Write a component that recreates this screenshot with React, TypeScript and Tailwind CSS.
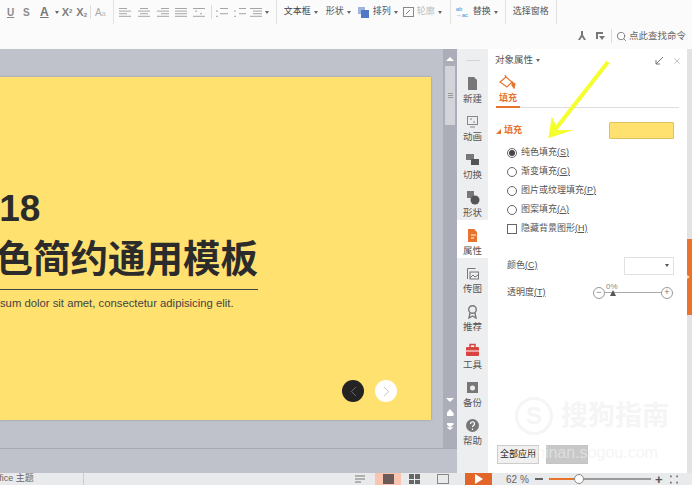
import React from 'react';
import { ChevronLeft, ChevronRight, Search, X } from 'lucide-react';

const font = { fontFamily: '"Liberation Sans", "Noto Sans CJK SC", sans-serif' };

const Caret = () => <span className="ml-[3px] inline-block border-x-[2px] border-t-[3px] border-x-transparent border-t-[#666]" />;

const Divider = ({ ml = 0 }: { ml?: number }) => (
  <div className="h-[24px] w-px shrink-0 self-start bg-[#e2e2e2]" style={{ marginLeft: ml }} />
);

const AlignIcon = ({ rows, x }: { rows: number[][]; x: number }) => (
  <svg width="12" height="10" viewBox="0 0 12 10" className="shrink-0 text-[#a5a5a5]" style={{ marginLeft: x }}>
    {rows.map(([a, b], i) => (
      <rect key={i} x={a} y={1 + i * 2.6} width={b} height="1" fill="currentColor" />
    ))}
  </svg>
);

const Ribbon = () => (
  <div className="h-[49px] shrink-0 bg-[#fbfbfb] text-[9px] text-[#666]">
    <div className="flex h-[25px] items-center pb-[1px]">
      <span className="ml-[7px] w-[8px] text-[10px] font-bold text-[#8b8b8b] underline">U</span>
      <span className="ml-[8px] w-[8px] text-[10px] font-bold text-[#8b8b8b]">S</span>
      <span className="ml-[9px] text-[12px] font-bold text-[#777] underline">A</span>
      <span className="ml-[3px]"><Caret /></span>
      <span className="ml-[3px] text-[11px] font-bold text-[#808080]">X<sup className="text-[6px]">2</sup></span>
      <span className="ml-[4px] text-[11px] font-bold text-[#808080]">X<sub className="text-[6px]">2</sub></span>
      <div className="ml-[3px] h-[14px] w-px bg-[#ddd]" />
      <span className="ml-[4px] text-[10px] text-[#aaa]">A</span>
      <span className="mt-[5px] text-[7px] text-[#bbb]">a</span>
      <div className="ml-[7px] h-[24px] w-px self-start bg-[#e2e2e2]" />
      <AlignIcon x={5} rows={[[0, 8], [0, 12], [0, 8], [0, 12]]} />
      <AlignIcon x={7} rows={[[2, 8], [0, 12], [2, 8], [0, 12]]} />
      <AlignIcon x={7} rows={[[4, 8], [0, 12], [4, 8], [0, 12]]} />
      <AlignIcon x={6} rows={[[0, 12], [0, 12], [0, 12], [0, 12]]} />
      <AlignIcon x={6} rows={[[0, 12], [2, 2], [7, 2], [0, 12]]} />
      <div className="ml-[6px] h-[14px] w-px bg-[#ddd]" />
      <AlignIcon x={4} rows={[[4, 8], [0, 2], [4, 8], [0, 2]]} />
      <AlignIcon x={6} rows={[[5, 7], [0, 2], [5, 7], [0, 2]]} />
      <AlignIcon x={4} rows={[[0, 12], [3, 9], [3, 9], [0, 12]]} />
      <Caret />
      <Divider ml={7} />
      <span className="ml-[7px] text-[#444]">文本框</span><Caret />
      <span className="ml-[8px] text-[#555]">形状</span><Caret />
      <svg width="11" height="11" viewBox="0 0 11 11" className="ml-[7px]">
        <rect x="0" y="0" width="7" height="7" fill="#9db4de" />
        <rect x="3" y="3" width="8" height="8" fill="#4f78c8" />
      </svg>
      <span className="ml-[4px] text-[#555]">排列</span><Caret />
      <svg width="11" height="11" viewBox="0 0 11 11" className="ml-[5px]" fill="none" stroke="#888">
        <rect x="0.5" y="0.5" width="10" height="9" />
        <path d="M3 7l4-4" />
      </svg>
      <span className="ml-[3px] text-[#bbb]">轮廓</span><Caret />
      <Divider ml={8} />
      <span className="ml-[5px] w-[15px] text-[6px] leading-[6px] text-[#4f8ec9]">ab<br />→ac</span>
      <span className="ml-[2px] text-[#555]">替换</span><Caret />
      <Divider ml={7} />
      <span className="ml-[7px] text-[#555]">选择窗格</span>
      <Divider ml={7} />
    </div>
    <div className="flex h-[24px] items-center justify-end pb-[2px] pr-[6px]">
      <svg width="10" height="10" viewBox="0 0 10 10" fill="#777"><path d="M4 0h2v4l3 5H7L5 6 3 9H1l3-5z" /></svg>
      <svg width="10" height="10" viewBox="0 0 10 10" fill="#777" className="ml-[8px]"><path d="M1 1h7v2H3v5H1zM4 5h6L7 9z" /></svg>
      <div className="ml-[6px] h-[14px] w-px bg-[#ddd]" />
      <Search size={11} className="ml-[4px] text-[#777]" />
      <span className="ml-[2px] text-[9.5px] text-[#666]">点此查找命令</span>
    </div>
  </div>
);

const Slide = () => (
  <div className="flex h-[343px] w-[431px] shrink-0 flex-col overflow-hidden bg-[#ffe170] shadow-[0_0_2px_rgba(0,0,0,0.25)]">
    <div className="-ml-[42px] mt-[111px] w-[300px] text-[#2b2b2b]">
      <div className="text-[37px] font-bold leading-[42px]">2018</div>
      <div className="mt-[7px] whitespace-nowrap text-[37.5px] font-bold leading-[44px]">黄色简约通用模板</div>
      <div className="mt-[8px] h-px w-full bg-[#444]" />
      <div className="-ml-[2px] mt-[6px] whitespace-nowrap text-[11.3px] leading-[14px] text-[#444]">
        Lorem ipsum dolor sit amet, consectetur adipisicing elit.
      </div>
    </div>
    <div className="mt-auto flex justify-end gap-[11px] pb-[18px] pr-[34px]">
      <div className="flex h-[22px] w-[22px] items-center justify-center rounded-full bg-[#232323]">
        <ChevronLeft size={17} strokeWidth={1} className="text-[#8a8a8a]" />
      </div>
      <div className="flex h-[22px] w-[22px] items-center justify-center rounded-full bg-white">
        <ChevronRight size={17} strokeWidth={1} className="text-[#aaa]" />
      </div>
    </div>
  </div>
);

const ScrollBar = () => (
  <div className="flex w-[14px] shrink-0 flex-col items-center bg-[#abaeb9]">
    <span className="mt-[8px] border-x-[4px] border-b-[4px] border-x-transparent border-b-white" />
    <div className="mt-[5px] flex h-[59px] w-[10px] flex-col items-center justify-center gap-[1px] bg-[#d2d4da]">
      <span className="h-px w-[5px] bg-[#999]" />
      <span className="h-px w-[5px] bg-[#999]" />
      <span className="h-px w-[5px] bg-[#999]" />
    </div>
    <span className="mt-auto border-x-[4px] border-t-[4px] border-x-transparent border-t-white" />
    <span className="mt-[7px] h-[7px] w-[7px] bg-white [clip-path:polygon(50%_0,100%_60%,100%_100%,0_100%,0_60%)]" />
    <span className="mt-[7px] mb-[18px] h-[7px] w-[7px] bg-white [clip-path:polygon(0_0,100%_0,100%_20%,50%_60%,100%_60%,50%_100%,0_60%,50%_60%,0_20%)]" />
  </div>
);

const icons: Record<string, React.ReactNode> = {
  新建: <path d="M3 1h6l3 3v10H3z" fill="#777" />,
  动画: <g fill="none" stroke="#888"><rect x="2.5" y="2.5" width="10" height="8" /><path d="M5 5h2M8 8h2M5 13h5" /></g>,
  切换: <g fill="#777"><rect x="1" y="2" width="8" height="6" /><rect x="6" y="7" width="8" height="6" fill="#555" /></g>,
  形状: <g fill="#777"><rect x="2" y="1" width="7" height="7" /><circle cx="10" cy="10" r="4.5" fill="#555" /></g>,
  属性: <g><path d="M3 1h6l3 3v10H3z" fill="#e8732c" /><path d="M6 7h5M6 10h3" stroke="#fff" /></g>,
  传图: <g fill="none" stroke="#777"><path d="M2.5 13V2.5h8" /><rect x="5" y="6" width="8.5" height="7" /><path d="M5 12l3-3 2 2 3-2" /></g>,
  推荐: <g fill="none" stroke="#777" strokeWidth="1.4"><circle cx="7.5" cy="5.5" r="3.8" /><path d="M5 9l-1 5 3.500-2 3.500 2-1-5" /></g>,
  工具: <g fill="#d9443f"><rect x="1" y="5" width="13" height="9" rx="1" /><path d="M5 5V2.500h5V5" fill="none" stroke="#d9443f" strokeWidth="1.500" /><rect x="1" y="8.500" width="13" height="1" fill="#fff" /></g>,
  备份: <g><rect x="2" y="2" width="11" height="11" fill="#777" /><circle cx="7.500" cy="8" r="2.500" fill="#eee" /></g>,
  帮助: <g><circle cx="7.500" cy="7.500" r="6.500" fill="#777" /><path d="M5.500 6c0-3 4-3 4 0 0 1.500-2 1.500-2 3M7.500 10.500v1.500" fill="none" stroke="#fff" strokeWidth="1.200" /></g>,
};

const SideBar = () => (
  <div className="flex w-[31px] shrink-0 flex-col items-center bg-[#edeef0] text-[9.5px] text-[#555]">
    <div className="mb-[7px] mt-[11px] h-px w-[14px] bg-[#d4d4d4]" />
    {Object.keys(icons).map((name) => (
      <div key={name} className={`flex h-[38px] w-full shrink-0 flex-col items-center justify-end pb-[1px] ${name === '属性' ? 'bg-white' : ''}`}>
        <svg width="15" height="15" viewBox="0 0 15 15">{icons[name]}</svg>
        <span className="mt-[1px] leading-[13px]">{name}</span>
      </div>
    ))}
  </div>
);

const Option = ({ label, hotkey, checked }: { label: string; hotkey: string; checked?: boolean }) => (
  <div className="flex h-[19px] items-center pl-[19px] text-[9px] text-[#555]">
    <span className="flex h-[10px] w-[10px] items-center justify-center rounded-full border border-[#666] bg-white">
      {checked && <span className="h-[6px] w-[6px] rounded-full bg-[#444]" />}
    </span>
    <span className="ml-[4px]">{label}<span className="underline">({hotkey})</span></span>
  </div>
);

const Panel = () => (
  <div className="relative flex w-[199px] shrink-0 flex-col bg-white text-[9px] text-[#555]">
    <div className="flex h-[22px] shrink-0 items-center pl-[7px] pr-[5px] pt-[1px]">
      <span className="text-[9.5px]">对象属性</span>
      <Caret />
      <svg width="9" height="9" viewBox="0 0 9 9" fill="none" stroke="#777" className="ml-auto mr-[8px]"><path d="M8 1L1 8M1 4v4h4" /></svg>
      <X size={10} strokeWidth={1} className="text-[#777]" />
    </div>
    <div className="mx-[8px] h-[37px] shrink-0 border-b border-[#ddd]">
      <svg width="18" height="16" viewBox="0 0 18 16" fill="none" stroke="#e8732c" strokeWidth="1.200" className="ml-[3px] mt-[4px]">
        <path d="M1 7l6-5 6 5-5 5z" />
        <path d="M7 2L6 0" />
        <path d="M13 7l3 2-1 4-2-3z" fill="#e8732c" />
      </svg>
      <div className="-mb-px flex h-[17px] w-[24px] items-end justify-center border-b-2 border-[#e8732c] pb-[1px] font-bold text-[#e8732c]">填充</div>
    </div>
    <div className="mx-[8px] mt-[14px] flex h-[17px] shrink-0 items-center font-bold text-[#e8732c]">
      <span className="mr-[3px] mt-[2px] border-b-[5px] border-l-[5px] border-b-[#e8732c] border-l-transparent" />
      填充
      <div className="ml-auto mr-[5px] h-[17px] w-[65px] rounded-[1px] border border-[#ddc25f] bg-[#ffe170]" />
    </div>
    <div className="mt-[4px]">
      <Option label="纯色填充" hotkey="S" checked />
      <Option label="渐变填充" hotkey="G" />
      <Option label="图片或纹理填充" hotkey="P" />
      <Option label="图案填充" hotkey="A" />
      <div className="flex h-[19px] items-center pl-[19px]">
        <span className="h-[10px] w-[10px] border border-[#666]" />
        <span className="ml-[4px]">隐藏背景图形<span className="underline">(H)</span></span>
      </div>
    </div>
    <div className="mt-[18px] flex h-[19px] items-center pl-[19px] pr-[13px]">
      <span>颜色<span className="underline">(C)</span></span>
      <div className="ml-auto flex h-[18px] w-[50px] items-center justify-end border border-[#e2e2e2] pr-[4px]">
        <span className="border-x-[2px] border-t-[3px] border-x-transparent border-t-[#555]" />
      </div>
    </div>
    <div className="mt-[8px] flex h-[19px] items-center pl-[19px] pr-[14px]">
      <span>透明度<span className="underline">(T)</span></span>
      <div className="relative ml-auto flex w-[80px] items-center">
        <span className="flex h-[12px] w-[12px] items-center justify-center rounded-full border border-[#999] text-[9px] leading-none text-[#777]">−</span>
        <span className="h-px flex-1 bg-[#aaa]" />
        <span className="flex h-[12px] w-[12px] items-center justify-center rounded-full border border-[#999] text-[9px] leading-none text-[#777]">+</span>
        <span className="absolute left-[13px] top-[-6px] text-[8px] text-[#888]">0%</span>
        <span className="absolute left-[17px] top-[3px] border-x-[3px] border-b-[6px] border-x-transparent border-b-[#555]" />
      </div>
    </div>
    <div className="mb-[9px] ml-[9px] mt-auto flex gap-[7px]">
      <div className="flex h-[19px] w-[42px] items-center justify-center border border-[#ccc] bg-[#f0f0f0] text-[#222]">全部应用</div>
      <div className="h-[19px] w-[42px] border border-[#c4c4c4] bg-[#c8c8c8]" />
    </div>
    {/* watermark */}
    <div className="pointer-events-none absolute left-[27px] top-[347px] flex items-center gap-[8px]">
      <span className="flex h-[38px] w-[38px] items-center justify-center rounded-full border-[3px] border-[#f5f5f5] text-[24px] font-bold text-[#f5f5f5]">S</span>
      <span className="text-[27px] font-bold text-[#f5f5f5]">搜狗指南</span>
    </div>
    <div className="pointer-events-none absolute left-[40px] top-[392px] text-[16px] text-[#eeeeee]/60">zhinan.sogou.com</div>
  </div>
);

const Strip = () => (
  <div className="flex w-[5px] shrink-0 flex-col bg-[#e3e3e5]">
    <div className="mt-[190px] flex h-[76px] items-center bg-[#e8732c]">
      <span className="border-y-[2px] border-l-[3px] border-y-transparent border-l-[#ffd9a8]" />
    </div>
  </div>
);

const StatusBar = () => (
  <div className="flex h-[12px] shrink-0 items-center overflow-hidden bg-[#e9eaec] text-[9px] text-[#666]">
    <div className="-ml-[10px] w-[93px] shrink-0 whitespace-nowrap">Office 主题</div>
    <div className="h-full w-px bg-[#ccc]" />
    <svg width="12" height="9" viewBox="0 0 12 9" stroke="#777" className="ml-[270px] shrink-0"><path d="M1 1h10M1 4h10M1 7h6" /></svg>
    <div className="ml-[9px] flex h-full w-[26px] shrink-0 items-center justify-center bg-[#f9c4b0]">
      <span className="h-[10px] w-[11px] bg-[#6b5a58]" />
    </div>
    <div className="ml-[8px] grid h-[10px] w-[11px] shrink-0 grid-cols-2 gap-px">
      <span className="bg-[#666]" /><span className="bg-[#666]" /><span className="bg-[#666]" /><span className="bg-[#666]" />
    </div>
    <div className="ml-[17px] h-[10px] w-[12px] shrink-0 border border-[#888]" />
    <div className="ml-[16px] flex h-full w-[27px] shrink-0 items-center justify-center bg-[#e2662a]">
      <span className="border-y-[5px] border-l-[8px] border-y-transparent border-l-white" />
    </div>
    <span className="ml-[14px] w-[24px] shrink-0 whitespace-nowrap text-[10px]">62 %</span>
    <span className="ml-[5px] h-[2px] w-[8px] shrink-0 bg-[#666]" />
    <div className="relative ml-[6px] flex h-[2px] w-[102px] shrink-0 bg-[#999]">
      <span className="h-full w-[26px] bg-[#e8732c]" />
      <span className="absolute left-[25px] top-[-4px] h-[10px] w-[10px] rounded-full border border-[#888] bg-white" />
    </div>
    <span className="ml-[4px] shrink-0 text-[13px] font-bold leading-none text-[#555]">+</span>
    <svg width="8" height="9" viewBox="0 0 9 9" fill="#777" className="ml-[7px] shrink-0">
      <rect x="0" y="0" width="2" height="2" /><rect x="7" y="0" width="2" height="2" /><rect x="0" y="7" width="2" height="2" /><rect x="7" y="7" width="2" height="2" />
    </svg>
  </div>
);

export default function App() {
  return (
    <div className="relative flex h-[485px] w-[692px] flex-col overflow-hidden" style={font}>
      <Ribbon />
      <div className="flex min-h-0 flex-1">
        <div className="flex w-[457px] shrink-0 flex-col">
          <div className="flex h-[400px] shrink-0 border-b border-[#a7aab3]">
            <div className="flex-1 overflow-hidden bg-[#bfc2cb] pt-[28px]">
              <Slide />
            </div>
            <ScrollBar />
          </div>
          <div className="flex-1 bg-[#bfc2cb]" />
        </div>
        <SideBar />
        <Panel />
        <Strip />
      </div>
      <StatusBar />
      {/* yellow arrow drawn on top of the screenshot */}
      <svg width="70" height="90" viewBox="0 0 70 90" className="absolute left-[545px] top-[55px]">
        <path d="M63 7L9 76" fill="none" stroke="#f6ff2e" strokeWidth="4" />
        <polygon points="3.300,83.300 6.700,61.700 13.300,75 28.300,75" fill="#f6ff2e" />
      </svg>
    </div>
  );
}
